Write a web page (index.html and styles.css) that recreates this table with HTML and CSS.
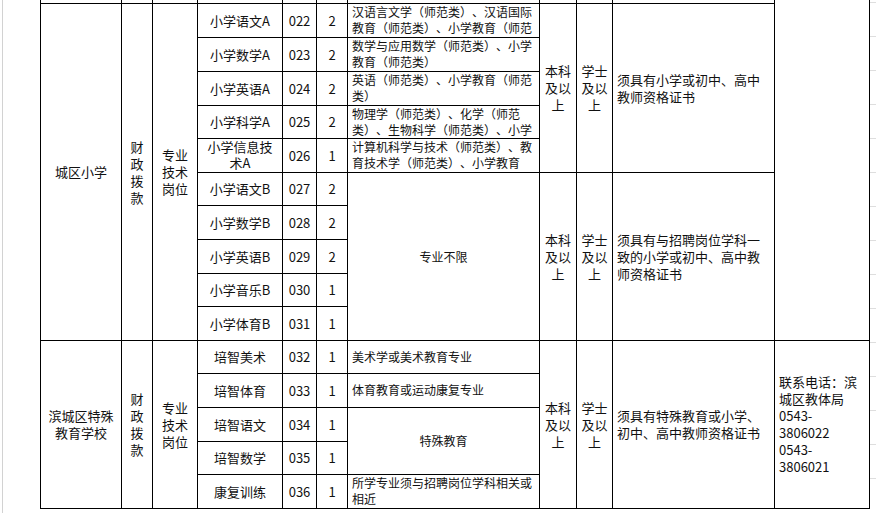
FILE: index.html
```html
<!DOCTYPE html>
<html lang="zh-CN">
<head>
<meta charset="utf-8">
<title>招聘岗位表</title>
<link rel="stylesheet" href="styles.css">
</head>
<body>
<div class="sheet">
  <div class="gutter"></div>
  <table class="grid">
    <colgroup>
      <col class="c-unit"><col class="c-fund"><col class="c-type"><col class="c-post"><col class="c-code"><col class="c-num"><col class="c-major"><col class="c-edu"><col class="c-deg"><col class="c-req"><col class="c-note">
    </colgroup>
    <tbody>
      <tr class="r-cut">
        <td></td><td></td><td></td><td></td><td></td><td></td><td></td><td></td><td></td><td></td>
        <td class="note open" rowspan="11"></td>
      </tr>
      <tr class="r34">
        <td rowspan="10">城区小学</td>
        <td rowspan="10">财<br>政<br>拨<br>款</td>
        <td rowspan="10">专业<br>技术<br>岗位</td>
        <td>小学语文A</td><td>022</td><td>2</td>
        <td class="major"><span>汉语言文学（师范类）、汉语国际</span><span>教育（师范类）、小学教育（师范</span></td>
        <td rowspan="5">本科<br>及以<br>上</td>
        <td rowspan="5">学士<br>及以<br>上</td>
        <td rowspan="5" class="req">须具有小学或初中、高中<br>教师资格证书</td>
      </tr>
      <tr class="r34">
        <td>小学数学A</td><td>023</td><td>2</td>
        <td class="major"><span>数学与应用数学（师范类）、小学</span><span>教育（师范类）</span></td>
      </tr>
      <tr class="r34">
        <td>小学英语A</td><td>024</td><td>2</td>
        <td class="major"><span>英语（师范类）、小学教育（师范</span><span>类）</span></td>
      </tr>
      <tr class="r33">
        <td>小学科学A</td><td>025</td><td>2</td>
        <td class="major"><span>物理学（师范类）、化学（师范</span><span>类）、生物科学（师范类）、小学</span></td>
      </tr>
      <tr class="r34">
        <td class="tight">小学信息技<br>术A</td><td>026</td><td>1</td>
        <td class="major"><span>计算机科学与技术（师范类）、教</span><span>育技术学（师范类）、小学教育</span></td>
      </tr>
      <tr class="r33">
        <td>小学语文B</td><td>027</td><td>2</td>
        <td rowspan="5" class="small">专业不限</td>
        <td rowspan="5">本科<br>及以<br>上</td>
        <td rowspan="5">学士<br>及以<br>上</td>
        <td rowspan="5" class="req">须具有与招聘岗位学科一<br>致的小学或初中、高中教<br>师资格证书</td>
      </tr>
      <tr class="r34">
        <td>小学数学B</td><td>028</td><td>2</td>
      </tr>
      <tr class="r34">
        <td>小学英语B</td><td>029</td><td>2</td>
      </tr>
      <tr class="r33">
        <td>小学音乐B</td><td>030</td><td>1</td>
      </tr>
      <tr class="r34">
        <td>小学体育B</td><td>031</td><td>1</td>
      </tr>
      <tr class="r33">
        <td rowspan="5">滨城区特殊<br>教育学校</td>
        <td rowspan="5">财<br>政<br>拨<br>款</td>
        <td rowspan="5">专业<br>技术<br>岗位</td>
        <td>培智美术</td><td>032</td><td>1</td>
        <td class="major"><span>美术学或美术教育专业</span></td>
        <td rowspan="5">本科<br>及以<br>上</td>
        <td rowspan="5">学士<br>及以<br>上</td>
        <td rowspan="5" class="req">须具有特殊教育或小学、<br>初中、高中教师资格证书</td>
        <td rowspan="5" class="note">联系电话：滨<br>城区教体局<br>0543-<br>3806022<br>0543-<br>3806021</td>
      </tr>
      <tr class="r34">
        <td>培智体育</td><td>033</td><td>1</td>
        <td class="major"><span>体育教育或运动康复专业</span></td>
      </tr>
      <tr class="r34">
        <td>培智语文</td><td>034</td><td>1</td>
        <td rowspan="2" class="small">特殊教育</td>
      </tr>
      <tr class="r33">
        <td>培智数学</td><td>035</td><td>1</td>
      </tr>
      <tr class="r34">
        <td>康复训练</td><td>036</td><td>1</td>
        <td class="major"><span>所学专业须与招聘岗位学科相关或</span><span>相近</span></td>
      </tr>
    </tbody>
  </table>
  <div class="edge"></div>
</div>
</body>
</html>
```
FILE: styles.css
```css
html, body {
  margin: 0;
  padding: 0;
  background: #fff;
}

body {
  width: 876px;
  height: 513px;
  overflow: hidden;
  font-family: "Noto Sans CJK SC", "Microsoft YaHei", sans-serif;
  font-size: 13px;
  color: #111;
  text-spacing-trim: space-all;
}

.sheet {
  display: flex;
  align-items: flex-start;
  height: 513px;
}

.gutter {
  width: 37px;
  height: 513px;
  margin-left: 2px;
  border-left: 1px solid #d2d2d2;
  flex: none;
}

.grid {
  flex: none;
  border-collapse: collapse;
  table-layout: fixed;
  width: 830px;
}

.c-unit { width: 81px; }
.c-fund { width: 31px; }
.c-type { width: 45px; }
.c-post { width: 85px; }
.c-code { width: 34px; }
.c-num { width: 31px; }
.c-major { width: 192px; }
.c-edu { width: 37px; }
.c-deg { width: 36px; }
.c-req { width: 162px; }
.c-note { width: 95px; }

.grid td {
  border: 1px solid #000;
  padding: 0 2px;
  text-align: center;
  vertical-align: middle;
  line-height: 17px;
  overflow: hidden;
  white-space: nowrap;
}

.grid .r-cut { height: 3px; }
.grid .r-cut td {
  border-top: none;
  padding: 0;
  font-size: 0;
  line-height: 0;
}

.grid td.open { border-top: none; }

.r34 { height: 34px; }
.r33 { height: 33px; }

.grid td.tight { line-height: 16px; }

.grid td.major {
  text-align: left;
  padding: 0 4px;
  font-size: 12px;
  line-height: 16px;
}

.major span {
  display: block;
}

.grid td.small {
  font-size: 12px;
}

.grid td.req {
  text-align: left;
  padding: 0 4px;
}

.grid td.note {
  text-align: left;
  padding: 0 4px;
}

.edge {
  flex: 1;
  height: 513px;
  background-image: repeating-linear-gradient(to bottom, transparent 0, transparent 33px, #dedede 33px, #dedede 34px);
  background-position: 0 -31px;
}
```
